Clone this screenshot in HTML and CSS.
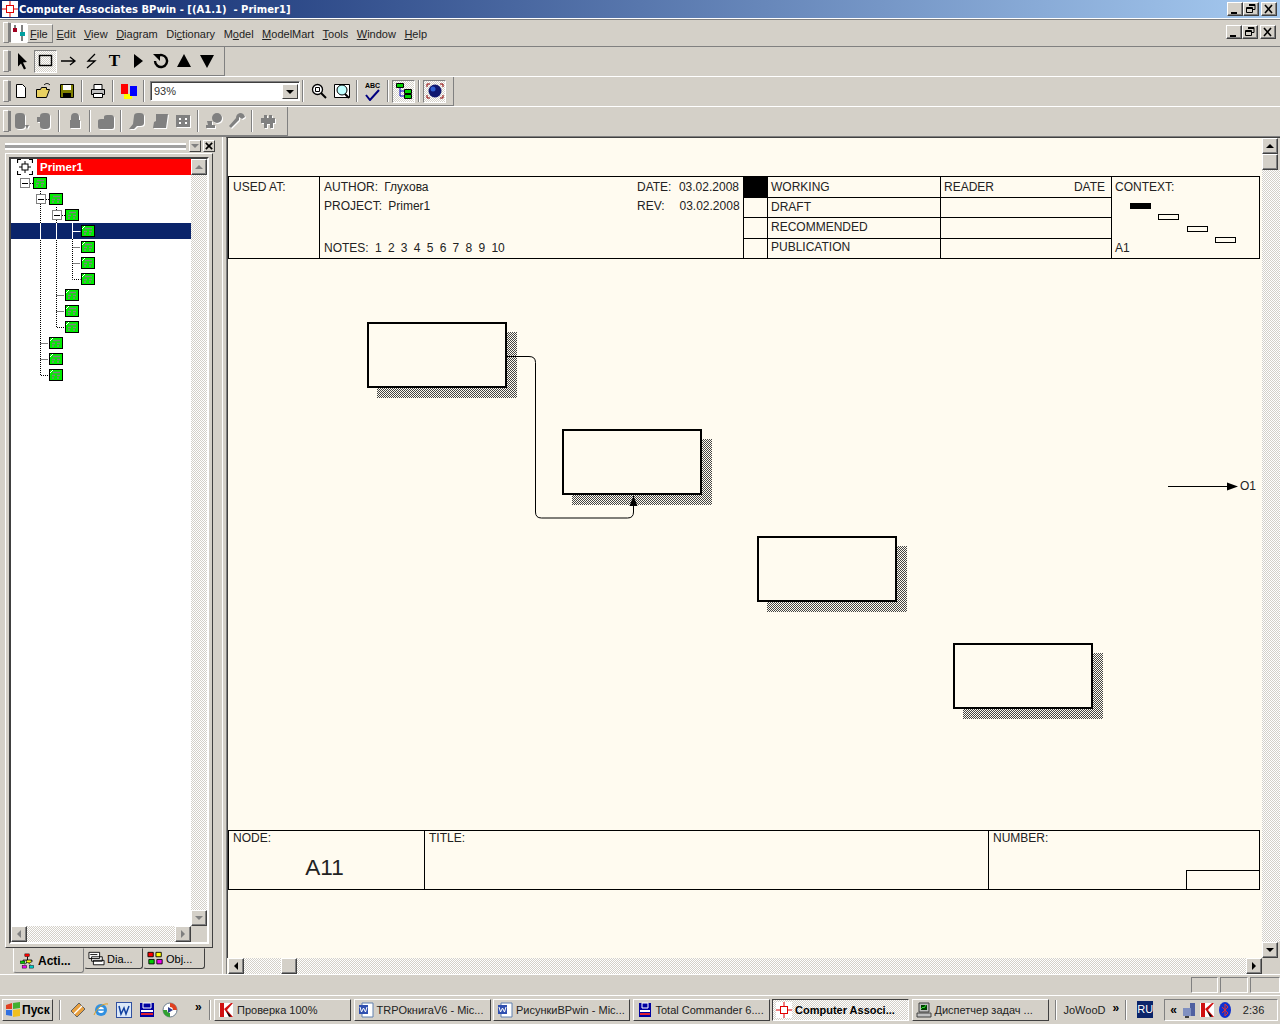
FILE: index.html
```html
<!DOCTYPE html>
<html lang="ru">
<head>
    <meta charset="UTF-8">
    <title>Computer Associates BPwin</title>
    <link rel="stylesheet" href="styles.css">
</head>
<body>
    <svg class="defs" width="0" height="0">
        <defs>
            <symbol id="ca" viewBox="0 0 16 16">
                <rect width="16" height="16" fill="#fff"/>
                <path d="M0 8h4M12 8h4M8 0v4M8 12v4" stroke="#e00000" fill="none"/>
                <rect x="4.500" y="4.500" width="7" height="7" fill="none" stroke="#e00000"/>
            </symbol>
            <symbol id="node" viewBox="0 0 14 12">
                <rect x=".5" y=".5" width="13" height="11" fill="#00ee00" stroke="#000"/>
                <path d="M4 3.500h7M3 6.500h3M8 6.500h3M3 9h2M8 9h2" stroke="#808080" stroke-width="1.300" fill="none"/>
            </symbol>
            <symbol id="leaf" viewBox="0 0 14 12">
                <rect x=".5" y=".5" width="13" height="11" fill="#00ee00" stroke="#000"/>
                <path d="M4 3.500h7M3 6.500h3M8 6.500h3M3 9h2M8 9h2" stroke="#808080" stroke-width="1.300" fill="none"/>
                <path d="M1 4l3-3" stroke="#fff"/>
            </symbol>
        </defs>
    </svg>

    <header class="titlebar">
        <svg class="title-icon"><use href="#ca"/></svg>
        <span class="title-text">Computer Associates BPwin - [(A1.1)&nbsp; - Primer1]</span>
        <div class="wbtns">
            <span class="wbtn"><svg viewBox="0 0 14 12"><path d="M3 9h6v2H3z"/></svg></span>
            <span class="wbtn"><svg viewBox="0 0 14 12"><path d="M5 1.500h6v5H9M2.500 4.500h6v5h-6z M5 2.500h6M2.500 5.500h6" fill="none" stroke="#000"/></svg></span>
            <span class="wbtn gap"><svg viewBox="0 0 14 12"><path d="M3 2l7 8M10 2l-7 8" stroke="#000" stroke-width="1.600"/></svg></span>
        </div>
    </header>

    <nav class="menubar">
        <span class="grip"></span>
        <svg class="menu-icon" viewBox="0 0 16 20"><rect width="16" height="20" fill="#fff"/><rect x="2" y="5" width="4" height="4" fill="#a00020"/><path d="M4 2v3" stroke="#000"/><path d="M11 2v16" stroke="#000"/><rect x="9" y="9" width="5" height="4" fill="#00a0a0"/></svg>
        <span class="menu-item active"><u>F</u>ile</span>
        <span class="menu-item"><u>E</u>dit</span>
        <span class="menu-item"><u>V</u>iew</span>
        <span class="menu-item"><u>D</u>iagram</span>
        <span class="menu-item">Di<u>c</u>tionary</span>
        <span class="menu-item">M<u>o</u>del</span>
        <span class="menu-item"><u>M</u>odelMart</span>
        <span class="menu-item"><u>T</u>ools</span>
        <span class="menu-item"><u>W</u>indow</span>
        <span class="menu-item"><u>H</u>elp</span>
        <div class="wbtns doc">
            <span class="wbtn"><svg viewBox="0 0 14 12"><path d="M3 9h6v2H3z"/></svg></span>
            <span class="wbtn"><svg viewBox="0 0 14 12"><path d="M5 1.500h6v5H9M2.500 4.500h6v5h-6z M5 2.500h6M2.500 5.500h6" fill="none" stroke="#000"/></svg></span>
            <span class="wbtn gap"><svg viewBox="0 0 14 12"><path d="M3 2l7 8M10 2l-7 8" stroke="#000" stroke-width="1.600"/></svg></span>
        </div>
    </nav>

    <div class="toolrow">
        <div class="toolbar tb-draw">
            <span class="grip"></span>
            <span class="tool"><svg viewBox="0 0 18 18"><path d="M4 1l9 9-4 .5 3 6-2 1-3-6-3 3z"/></svg></span>
            <span class="tool pressed"><svg viewBox="0 0 18 18"><rect x="2.500" y="3.500" width="12" height="10" fill="none" stroke="#000" stroke-width="1.400"/></svg></span>
            <span class="tool"><svg viewBox="0 0 18 18"><path d="M1 9h13M10 5l5 4-5 4" fill="none" stroke="#000" stroke-width="1.300"/></svg></span>
            <span class="tool"><svg viewBox="0 0 18 18"><path d="M12 2L5 9h7L4 16" fill="none" stroke="#000" stroke-width="1.300"/></svg></span>
            <span class="tool tool-t">T</span>
            <span class="tool"><svg viewBox="0 0 18 18"><path d="M5 2l9 7-9 7z"/></svg></span>
            <span class="tool"><svg viewBox="0 0 18 18"><path d="M3 9a6 6 0 1 0 2-4.500" fill="none" stroke="#000" stroke-width="2.400"/><path d="M1 2h7v7z"/></svg></span>
            <span class="tool"><svg viewBox="0 0 18 18"><path d="M9 2l7 13H2z"/></svg></span>
            <span class="tool"><svg viewBox="0 0 18 18"><path d="M9 16L2 3h14z"/></svg></span>
        </div>
    </div>

    <div class="toolrow">
        <div class="toolbar tb-main">
            <span class="grip"></span>
            <span class="tool"><svg viewBox="0 0 18 18"><path d="M4.500 2.500h6l3 3v10h-9z" fill="#fff" stroke="#000"/></svg></span>
            <span class="tool"><svg viewBox="0 0 18 18"><path d="M1.500 7.500h4l1-2h5v2h3l-3 8h-10z" fill="#e8d060" stroke="#000"/><path d="M9 3c2-2 4-2 6 0" fill="none" stroke="#000"/></svg></span>
            <span class="tool"><svg viewBox="0 0 18 18"><path d="M2.500 2.500h13v13h-13z" fill="#808000" stroke="#000"/><path d="M5 3h8v5H5z" fill="#fff"/><path d="M5 11h8v4H5z" fill="#000"/></svg></span>
            <span class="sep"></span>
            <span class="tool"><svg viewBox="0 0 18 18"><path d="M5 2.500h8v5H5z" fill="#fff" stroke="#000"/><path d="M2.500 7.500h13v5h-13z" fill="#c0c0c0" stroke="#000"/><path d="M4.500 11.500h9v4h-9z" fill="#fff" stroke="#000"/></svg></span>
            <span class="sep"></span>
            <span class="tool"><svg viewBox="0 0 18 18"><rect x="1" y="2" width="7" height="10" fill="#f00"/><rect x="4" y="12" width="8" height="5" fill="#ff0"/><rect x="10" y="4" width="7" height="10" fill="#00f"/></svg></span>
            <span class="sep"></span>
            <div class="combo"><span class="combo-value">93%</span><span class="combo-btn"><i></i></span></div>
            <span class="sep"></span>
            <span class="tool"><svg viewBox="0 0 18 18"><circle cx="7.500" cy="7.500" r="5" fill="#fff" stroke="#000" stroke-width="1.300"/><path d="M5.500 5.500h4v4h-4z" fill="none" stroke="#000"/><path d="M11 11l5 5" stroke="#000" stroke-width="2"/></svg></span>
            <span class="tool"><svg viewBox="0 0 18 18"><path d="M1.500 2.500h15v13h-15z" fill="#fff" stroke="#000"/><circle cx="9" cy="8" r="5" fill="#c0ffff" stroke="#000"/><path d="M12 12l4 4" stroke="#000" stroke-width="2"/></svg></span>
            <span class="sep"></span>
            <span class="tool tool-abc"><b>ABC</b><svg viewBox="0 0 18 12"><path d="M2 6l4 5L15 1" fill="none" stroke="#000080" stroke-width="2"/></svg></span>
            <span class="sep"></span>
            <span class="tool pressed"><svg viewBox="0 0 18 18"><path d="M5 5v9h5M5 9h5" fill="none" stroke="#0000c0"/><path d="M1.500 1.500h7v4h-7zM9.500 7.500h7v4h-7zM9.500 12.500h7v4h-7z" fill="#00d000" stroke="#000"/></svg></span>
            <span class="sep"></span>
            <span class="tool pressed"><svg viewBox="0 0 18 18"><circle cx="9" cy="9" r="6.500" fill="#101870"/><circle cx="7" cy="7" r="2.500" fill="#3060d0"/><path d="M1 5V2h3M14 2h3v3M1 13v3h3M14 16h3v-3" fill="none" stroke="#900000"/></svg></span>
        </div>
    </div>

    <div class="toolrow last">
        <div class="toolbar tb-model">
            <span class="grip"></span>
            <span class="tool off"><svg viewBox="0 0 18 18"><path d="M3 4q0-3 4-3h2q4 0 4 3v10q0 3-4 3H7q-4 0-4-3z M13 13h4l-2 4z"/></svg></span>
            <span class="tool off"><svg viewBox="0 0 18 18"><path d="M5 4q0-3 4-3h2q4 0 4 3v10q0 3-4 3H9q-4 0-4-3V10H2V5h3z"/></svg></span>
            <span class="sep"></span>
            <span class="tool off"><svg viewBox="0 0 18 18"><path d="M5 8V5a4 4 0 0 1 8 0v3h1v8H4V8z"/></svg></span>
            <span class="sep"></span>
            <span class="tool off"><svg viewBox="0 0 18 18"><path d="M1 9q0-2 3-2h3V5q0-2 3-2h4q3 0 3 3v9q0 2-2 2H3q-2 0-2-2z"/></svg></span>
            <span class="sep"></span>
            <span class="tool off"><svg viewBox="0 0 18 18"><path d="M6 4q0-3 4-3h2q4 0 4 3v7q0 3-4 3H9l-3 3H1l4-5z"/></svg></span>
            <span class="tool off"><svg viewBox="0 0 18 18"><path d="M5 2h12l-2 14H2l1-6 2-1z"/></svg></span>
            <span class="tool off"><svg viewBox="0 0 18 18"><path d="M2 3h14v12H2z"/><path d="M5 6h2v2H5zM11 6h2v2h-2zM5 10h2v2H5zM11 10h2v2h-2z" fill="#fff"/></svg></span>
            <span class="sep"></span>
            <span class="tool off"><svg viewBox="0 0 18 18"><circle cx="12" cy="6" r="5"/><path d="M2 9h5v4h3v3H1v-3h2z"/></svg></span>
            <span class="tool off"><svg viewBox="0 0 18 18"><path d="M12 1q4 0 5 4l-3 2-3-2v3L3 16 1 14l7-8q0-4 4-5z"/></svg></span>
            <span class="sep"></span>
            <span class="tool off"><svg viewBox="0 0 18 18"><path d="M5 3h3v3h2V3h3v3h3v5h-2v5h-3v-4H8v4H5v-5H2V6h3z"/></svg></span>
        </div>
    </div>

    <div class="workspace">
        <aside class="sidebar">
            <div class="dock-head">
                <span class="dock-grip"></span>
                <span class="dock-btn"><i class="tri-down"></i></span>
                <span class="dock-btn"><svg viewBox="0 0 11 11"><path d="M2 2l7 7M9 2l-7 7" stroke="#000" stroke-width="1.800"/></svg></span>
            </div>
            <div class="tree-frame">
                <div class="tree">
                    <div class="tree-body">
                        <div class="tree-root">
                            <svg class="root-icon" viewBox="0 0 16 16"><path d="M.5 4V.5H4M12 .5h3.500V4M.5 12v3.500H4M12 15.500h3.500V12" fill="none" stroke="#000" stroke-width="1.200"/><rect x="5" y="5" width="6" height="6" fill="#fff" stroke="#000"/><path d="M8 2v3M8 11v3M2 8h3M11 8h3" stroke="#000"/></svg>
                            <span class="root-label">Primer1</span>
                        </div>
                        <div class="tree-rows">
                            <div class="tree-row lvl-0"><span class="exp"></span><svg class="tn"><use href="#node"/></svg></div>
                            <div class="tree-row lvl-1"><span class="exp"></span><svg class="tn"><use href="#node"/></svg></div>
                            <div class="tree-row lvl-2"><span class="exp"></span><svg class="tn"><use href="#node"/></svg></div>
                            <div class="tree-row lvl-3 selected"><span class="noexp"></span><svg class="tn"><use href="#leaf"/></svg></div>
                            <div class="tree-row lvl-3"><span class="noexp"></span><svg class="tn"><use href="#leaf"/></svg></div>
                            <div class="tree-row lvl-3"><span class="noexp"></span><svg class="tn"><use href="#leaf"/></svg></div>
                            <div class="tree-row lvl-3"><span class="noexp"></span><svg class="tn"><use href="#leaf"/></svg></div>
                            <div class="tree-row lvl-2"><span class="noexp"></span><svg class="tn"><use href="#leaf"/></svg></div>
                            <div class="tree-row lvl-2"><span class="noexp"></span><svg class="tn"><use href="#leaf"/></svg></div>
                            <div class="tree-row lvl-2"><span class="noexp"></span><svg class="tn"><use href="#leaf"/></svg></div>
                            <div class="tree-row lvl-1"><span class="noexp"></span><svg class="tn"><use href="#leaf"/></svg></div>
                            <div class="tree-row lvl-1"><span class="noexp"></span><svg class="tn"><use href="#leaf"/></svg></div>
                            <div class="tree-row lvl-1"><span class="noexp"></span><svg class="tn"><use href="#leaf"/></svg></div>
                            <svg class="tree-lines" width="180" height="210" viewBox="0 0 180 210">
                                <path class="dot" d="M19 8.500h3M35 24.500h3M51 40.500h3M29.500 16v3M45.500 32v3M29.500 29v171.500h8M29.500 168.500h8M29.500 184.500h8M45.500 45v107.500h8M45.500 120.500h8M45.500 136.500h8M61.500 48v56.500h8M61.500 72.500h8M61.500 88.500h8"/>
                                <path class="solid" d="M29.500 48v16M45.500 48v16M61.500 48v16M61.500 56.500h8"/>
                            </svg>
                        </div>
                    </div>
                    <div class="sb-v">
                        <span class="sb-btn"><i class="tri-up gray"></i></span>
                        <span class="sb-track"></span>
                        <span class="sb-btn"><i class="tri-down gray"></i></span>
                    </div>
                    <div class="sb-h">
                        <span class="sb-btn"><i class="tri-left gray"></i></span>
                        <span class="sb-track"></span>
                        <span class="sb-btn"><i class="tri-right gray"></i></span>
                    </div>
                    <div class="sb-corner"></div>
                </div>
            </div>
            <div class="tabs">
                <span class="tab current">
                    <svg viewBox="0 0 18 18"><path d="M9 4v4M4 10V8h10v2M6 13l3-3 3 3" fill="none" stroke="#000"/><rect x="6" y="1" width="5" height="3" fill="#f00" stroke="#000" stroke-width=".5"/><rect x="1" y="9" width="5" height="3" fill="#0c0" stroke="#000" stroke-width=".5"/><rect x="8" y="8" width="5" height="3" fill="#ff0" stroke="#000" stroke-width=".5"/><rect x="3" y="14" width="5" height="3" fill="#e0e" stroke="#000" stroke-width=".5"/><rect x="11" y="14" width="5" height="3" fill="#0cc" stroke="#000" stroke-width=".5"/></svg>
                    Acti...
                </span>
                <span class="tab tab-dia">
                    <svg viewBox="0 0 18 18"><path d="M.5 1.500h12v7h-12zM3.500 6.500h12v5h-12zM5.500 10.500h12v5h-12z" fill="#fff" stroke="#000"/><path d="M2 4h8" stroke="#000"/></svg>
                    Dia...
                </span>
                <span class="tab tab-obj">
                    <svg viewBox="0 0 18 18"><path d="M.5 1.500h6v5h-6z" fill="#f00" stroke="#000"/><path d="M9.500 1.500h6v5h-6z" fill="#ff0" stroke="#000"/><path d="M1.500 9.500h6v5h-6z" fill="#0c0" stroke="#000"/><path d="M10.500 9.500h6v5h-6z" fill="#e0e" stroke="#000"/></svg>
                    Obj...
                </span>
            </div>
        </aside>

        <section class="docview">
            <div class="sheet-area">
                <div class="sheet-top"></div>
                <div class="form-head">
                    <div class="fh-used">USED AT:</div>
                    <div class="fh-author">
                        <div class="fh-line"><span class="k1">AUTHOR:&nbsp; Глухова</span><span class="k2">DATE:&nbsp; 03.02.2008</span></div>
                        <div class="fh-line"><span class="k1">PROJECT:&nbsp; Primer1</span><span class="k2">REV:&nbsp; &nbsp; 03.02.2008</span></div>
                        <div class="fh-notes">NOTES:&nbsp; 1&nbsp; 2&nbsp; 3&nbsp; 4&nbsp; 5&nbsp; 6&nbsp; 7&nbsp; 8&nbsp; 9&nbsp; 10</div>
                    </div>
                    <div class="fh-status">
                        <div class="st-row"><span class="st-mark black"></span><span class="st-name">WORKING</span><span class="st-reader"><span>READER</span><span>DATE</span></span></div>
                        <div class="st-row"><span class="st-mark"></span><span class="st-name">DRAFT</span><span class="st-reader"></span></div>
                        <div class="st-row"><span class="st-mark"></span><span class="st-name">RECOMMENDED</span><span class="st-reader"></span></div>
                        <div class="st-row"><span class="st-mark"></span><span class="st-name">PUBLICATION</span><span class="st-reader"></span></div>
                    </div>
                    <div class="fh-context">
                        <span class="ctx-title">CONTEXT:</span>
                        <span class="ctx-box ctx-1"></span>
                        <span class="ctx-box ctx-2"></span>
                        <span class="ctx-box ctx-3"></span>
                        <span class="ctx-box ctx-4"></span>
                        <span class="ctx-node">A1</span>
                    </div>
                </div>
                <div class="diagram">
                    <div class="box box-1"></div>
                    <div class="box box-2"></div>
                    <div class="box box-3"></div>
                    <div class="box box-4"></div>
                    <svg class="arrows" width="1032" height="570" viewBox="0 0 1032 570">
                        <path d="M278 97.500h23q6.500 0 6.500 6V253q0 6 6 6h86q6 0 6-6v-16" fill="none" stroke="#000"/>
                        <path d="M405.500 237l4 10h-8z" fill="#000"/>
                        <path d="M940 227.500h62" fill="none" stroke="#000"/>
                        <path d="M999 223.500l11 4-11 4z" fill="#000"/>
                    </svg>
                    <span class="o1">O1</span>
                </div>
                <div class="form-foot">
                    <div class="ff-node"><span>NODE:</span><b>A11</b></div>
                    <div class="ff-title">TITLE:</div>
                    <div class="ff-number">NUMBER:<span class="ff-page"></span></div>
                </div>
            </div>
            <div class="sb-v big">
                <span class="sb-btn"><i class="tri-up"></i></span>
                <span class="sb-thumb"></span>
                <span class="sb-track"></span>
                <span class="sb-btn"><i class="tri-down"></i></span>
            </div>
            <div class="sb-h big">
                <span class="sb-btn"><i class="tri-left"></i></span>
                <span class="sb-track narrow"></span>
                <span class="sb-thumb"></span>
                <span class="sb-track"></span>
                <span class="sb-btn"><i class="tri-right"></i></span>
            </div>
            <div class="sb-corner"></div>
        </section>
    </div>

    <div class="statusbar">
        <span class="st-pane p1"></span>
        <span class="st-pane p2"></span>
        <span class="st-pane p3"></span>
    </div>

    <footer class="taskbar">
        <span class="start">
            <svg viewBox="0 0 16 16"><path d="M1 3l6-2v6H1z" fill="#e04020"/><path d="M8 1l7-1v6l-7 1z" fill="#40b030"/><path d="M1 8h6v6l-6-1z" fill="#3070e0"/><path d="M8 8l7-1v7l-7 1z" fill="#f0c020"/></svg>
            Пуск
        </span>
        <span class="tray-sep"></span>
        <div class="quick">
            <svg viewBox="0 0 16 16"><path d="M9 1l6 6-8 8-6-6z" fill="#e8a040" stroke="#606060"/><path d="M4 12L12 4" stroke="#fff" stroke-width="1.500"/></svg>
            <svg viewBox="0 0 16 16"><circle cx="8" cy="8" r="6" fill="#3090e0"/><circle cx="8" cy="8" r="3" fill="#fff"/><path d="M5 8h6" stroke="#3090e0" stroke-width="1.500"/><path d="M1 13C4 6 10 1 15 2" fill="none" stroke="#e0a020"/></svg>
            <svg viewBox="0 0 16 16"><rect x=".5" y=".5" width="15" height="15" fill="#dbe8f8" stroke="#3050a0"/><path d="M3 4l2 8 3-6 2 6 3-8" fill="none" stroke="#1040a0" stroke-width="1.500"/></svg>
            <svg viewBox="0 0 16 16"><path d="M1 1h14v14H1z" fill="#0000a0"/><path d="M4 1h8v5H4z" fill="#0000a0" stroke="#fff"/><path d="M2 8h12v2H2z" fill="#fff"/><path d="M2 11h12v2H2z" fill="#e02030"/></svg>
            <svg viewBox="0 0 16 16"><circle cx="8" cy="8" r="7" fill="#fff" stroke="#708090"/><path d="M8 1a7 7 0 0 1 7 7h-4a3 3 0 0 0-3-3z" fill="#e04020"/><path d="M1 8a7 7 0 0 0 7 7v-4a3 3 0 0 1-3-3z" fill="#30a030"/><path d="M6 5l5 3-5 3z" fill="#304090"/></svg>
            <span class="more">»</span>
        </div>
        <span class="tray-sep"></span>
        <div class="tasks">
            <span class="task"><svg viewBox="0 0 16 16"><path d="M1 1h14v14H1z" fill="#fff"/><path d="M2 1h4v14H2zM6 7l7-6h2L9 8l6 7h-3z" fill="#d01010"/><path d="M8 9l5 5-2 1z"/></svg><span>Проверка 100%</span></span>
            <span class="task"><svg viewBox="0 0 16 16"><path d="M4 1h11v14H4z" fill="#fff" stroke="#6080b0"/><rect x="1" y="3" width="9" height="9" fill="#3050b0"/><path d="M2 5l1.500 5L5.500 6l2 4L9 5" fill="none" stroke="#fff"/></svg><span>TRPOкнигаV6 - Mic...</span></span>
            <span class="task"><svg viewBox="0 0 16 16"><path d="M4 1h11v14H4z" fill="#fff" stroke="#6080b0"/><rect x="1" y="3" width="9" height="9" fill="#3050b0"/><path d="M2 5l1.500 5L5.500 6l2 4L9 5" fill="none" stroke="#fff"/></svg><span>РисункиBPwin - Mic...</span></span>
            <span class="task"><svg viewBox="0 0 16 16"><path d="M2 1h12v14H2z" fill="#0000a0"/><path d="M5 1h6v5H5z" fill="#0000a0" stroke="#fff"/><path d="M3 8h10v2H3z" fill="#fff"/><path d="M3 11h10v2H3z" fill="#e02030"/></svg><span>Total Commander 6....</span></span>
            <span class="task current"><svg><use href="#ca"/></svg><span>Computer Associ...</span></span>
            <span class="task"><svg viewBox="0 0 16 16"><path d="M3 1h10v9H3z" fill="#c0c0c0" stroke="#404040"/><path d="M5 3h6v5H5z" fill="#004000"/><path d="M5 7l2-2 1 1 2-3" stroke="#30e030" fill="none"/><path d="M1 11h14v4H1z" fill="#c0c0c0" stroke="#404040"/></svg><span>Диспетчер задач ...</span></span>
        </div>
        <span class="tray-sep"></span>
        <span class="jowood">JoWooD</span><span class="more two">»</span>
        <span class="tray-sep"></span>
        <span class="lang">RU</span>
        <div class="tray">
            <span class="tray-arrow">«</span>
            <svg viewBox="0 0 16 16"><path d="M9 1h5v13H9z" fill="#5060a0"/><path d="M2 6h8v8H2z" fill="#8090c0"/><path d="M4 14h4v2H4z" fill="#404040"/></svg>
            <svg viewBox="0 0 16 16"><path d="M1 1h14v14H1z" fill="#fff"/><path d="M2 1h4v14H2zM6 7l7-6h2L9 8l6 7h-3z" fill="#d01010"/><path d="M8 9l5 5-2 1z"/></svg>
            <svg viewBox="0 0 16 16"><ellipse cx="8" cy="8" rx="6" ry="8" fill="#1030d0"/><path d="M5 5l6 6-3 3V2l3 3-6 6" fill="none" stroke="#e03030"/></svg>
            <span class="clock">2:36</span>
        </div>
    </footer>
</body>
</html>
```

FILE: styles.css
```css
* {
    box-sizing: border-box;
}

html, body {
    margin: 0;
    padding: 0;
}

body {
    width: 1280px;
    height: 1024px;
    overflow: hidden;
    display: flex;
    flex-direction: column;
    background-color: #d4d0c8;
    color: #000;
    font-family: "Liberation Sans", Arial, sans-serif;
    font-size: 11px;
}

.defs {
    position: absolute;
}

svg {
    display: block;
    flex: none;
}

/* window title */
.titlebar {
    height: 18px;
    display: flex;
    align-items: center;
    padding: 0 3px 0 2px;
    background: linear-gradient(to right, #0a246a, #a6caf0);
    color: #fff;
    font-weight: bold;
    flex: none;
}

.title-icon {
    width: 16px;
    height: 16px;
}

.title-text {
    margin-left: 1px;
    font-family: "DejaVu Sans", sans-serif;
    font-size: 10px;
}

.wbtns {
    margin-left: auto;
    display: flex;
}

.wbtn {
    width: 16px;
    height: 14px;
    background: #d4d0c8;
    border: 1px solid;
    border-color: #fff #404040 #404040 #fff;
    box-shadow: inset -1px -1px 0 #808080;
}

.wbtn.gap {
    margin-left: 2px;
}

.wbtn svg {
    width: 14px;
    height: 12px;
}

/* menu */
.menubar {
    height: 29px;
    flex: none;
    display: flex;
    align-items: center;
    padding: 0 2px 0 3px;
    border-top: 1px solid #fff;
    border-bottom: 1px solid #808080;
    box-shadow: inset 0 1px 0 #808080;
}

.grip {
    width: 6px;
    align-self: stretch;
    margin: 3px 2px 3px 0;
    flex: none;
    border: 1px solid;
    border-color: #fff #808080 #808080 #fff;
    box-shadow: 3px 0 0 -1px #808080;
}

.menu-icon {
    width: 16px;
    height: 20px;
}

.menu-item {
    padding: 0 5px 0 3.500px;
    height: 19px;
    line-height: 19px;
    margin-top: 3px;
    color: #222;
}

.menu-item.active {
    margin-top: 2px;
    padding: 0 6px 0 2px;
    border: 1px solid;
    border-color: #fff #808080 #808080 #fff;
    line-height: 18px;
    width: 26px;
}

.wbtns.doc {
    padding-right: 2px;
    margin-bottom: 2px;
}

/* toolbars */
.toolrow {
    height: 30px;
    flex: none;
    display: flex;
    border-bottom: 1px solid #fff;
}

.toolrow.last {
    border-bottom: 1px solid #808080;
}

.toolbar {
    height: 29px;
    display: flex;
    align-items: center;
    padding: 0 2px 0 3px;
    border-right: 1px solid #808080;
    border-bottom: 1px solid #808080;
}

.tb-draw {
    width: 225px;
}

.tb-main {
    width: 454px;
}

.tb-model {
    width: 288px;
}

.tb-main .grip, .tb-model .grip {
    margin-right: 0;
}

.tool {
    width: 23px;
    height: 23px;
    flex: none;
    display: flex;
    align-items: center;
    justify-content: center;
}

.tool svg {
    width: 18px;
    height: 18px;
}

.tool.pressed {
    border: 1px solid;
    border-color: #808080 #fff #fff #808080;
    background: repeating-conic-gradient(#fff 0 25%, #d4d0c8 0 50%) 0 0 / 2px 2px;
}

.tool.off svg {
    fill: #808080;
    filter: drop-shadow(1px 1px 0 #fff);
}

.tool-t {
    font-family: "Liberation Serif", serif;
    font-weight: bold;
    font-size: 17px;
}

.tool-abc {
    flex-direction: column;
}

.tool-abc b {
    font-size: 7px;
    line-height: 7px;
}

.tool-abc svg {
    height: 12px;
}

.sep {
    width: 2px;
    height: 22px;
    flex: none;
    margin: 0 3px;
    border-left: 1px solid #808080;
    border-right: 1px solid #fff;
}

.combo {
    width: 150px;
    height: 20px;
    flex: none;
    margin: 0 -1px 0 2px;
    display: flex;
    background: #fff;
    border: 1px solid;
    border-color: #808080 #fff #fff #808080;
    box-shadow: inset 1px 1px 0 #404040;
}

.combo-value {
    flex: 1;
    padding: 3px 0 0 3px;
    color: #333;
}

.combo-btn {
    width: 16px;
    margin: 2px 1px 1px 0;
    background: #d4d0c8;
    border: 1px solid;
    border-color: #fff #404040 #404040 #fff;
    display: flex;
    align-items: center;
    justify-content: center;
}

.combo-btn i {
    border: 4px solid transparent;
    border-top-color: #000;
    border-bottom: 0;
}

/* left panel */
.workspace {
    flex: 1;
    display: flex;
    min-height: 0;
    border-bottom: 1px solid #fff;
}

.sidebar {
    width: 226px;
    flex: none;
    display: flex;
    flex-direction: column;
    padding: 3px 13px 0 5px;
    background: linear-gradient(#fff, #fff) 222px 0 / 1px 100% no-repeat;
}

.dock-head {
    height: 12px;
    flex: none;
    display: flex;
    align-items: center;
    gap: 2px;
    margin-right: -2px;
}

.dock-grip {
    flex: 1;
    height: 7px;
    border-top: 2px solid #fff;
    border-bottom: 2px solid #fff;
    background: #a0a0a0;
    margin-right: 1px;
}

.dock-btn {
    width: 12px;
    height: 12px;
    display: flex;
    align-items: center;
    justify-content: center;
    border: 1px solid;
    border-color: #fff #404040 #404040 #fff;
}

.dock-btn svg {
    width: 10px;
    height: 10px;
}

.dock-btn .tri-down {
    border-top-color: #808080;
}

.tree-frame {
    height: 795px;
    margin-top: 1px;
    flex: none;
    padding: 3px;
    border: 1px solid;
    border-color: #fff #404040 #404040 #fff;
}

.tree {
    height: 100%;
    display: grid;
    grid-template-columns: 1fr 16px;
    grid-template-rows: 1fr 16px;
    border: 2px solid;
    border-color: #404040 #fff #fff #404040;
    background: #fff;
}

.tree-body {
    overflow: hidden;
}

.tree-root {
    height: 16px;
    display: flex;
    background: #fff;
    color: #fff;
}

.root-icon {
    width: 16px;
    height: 16px;
    margin: 0 4px 0 6px;
}

.root-label {
    flex: 1;
    padding-left: 3px;
    line-height: 17px;
    background: #f00;
    font-size: 11.500px;
    font-weight: bold;
}

.tree-rows {
    position: relative;
}

.tree-row {
    height: 16px;
    display: flex;
    padding-top: 2px;
}

.tree-row.selected {
    background: #0a246a;
}

.lvl-0 {
    padding-left: 9px;
}

.lvl-1 {
    padding-left: 25px;
}

.lvl-2 {
    padding-left: 41px;
}

.lvl-3 {
    padding-left: 57px;
}

.exp {
    width: 10px;
    height: 10px;
    margin: 1px 3px 0 0;
    flex: none;
    background: #fff linear-gradient(#000, #000) center / 6px 1px no-repeat;
    border: 1px solid #808080;
}

.noexp {
    width: 13px;
    flex: none;
}

.tn {
    width: 14px;
    height: 12px;
}

.tree-lines {
    position: absolute;
    left: 0;
    top: 0;
}

.tree-lines .dot {
    stroke: #000;
    fill: none;
    stroke-dasharray: 1 1;
}

.tree-lines .solid {
    stroke: #fff;
    fill: none;
}

/* scrollbars */
.sb-v {
    display: flex;
    flex-direction: column;
    width: 16px;
}

.sb-h {
    display: flex;
    height: 16px;
}

.sb-v.big {
    width: 18px;
    background: #d4d0c8;
}

.sb-h.big {
    padding-left: 1px;
}

.sb-track {
    flex: 1;
    background: repeating-conic-gradient(#fff 0 25%, #d4d0c8 0 50%) 0 0 / 2px 2px;
}

.sb-track.narrow {
    flex: none;
    width: 37px;
}

.sb-btn, .sb-thumb {
    width: 16px;
    height: 16px;
    flex: none;
    display: flex;
    align-items: center;
    justify-content: center;
    background: #d4d0c8;
    border: 1px solid;
    border-color: #fff #404040 #404040 #fff;
    box-shadow: inset -1px -1px 0 #808080;
}

.sb-corner {
    background: #d4d0c8;
}

.tri-up, .tri-down, .tri-left, .tri-right {
    width: 0;
    height: 0;
    border: 4px solid transparent;
}

.tri-up {
    border-top: 0;
    border-bottom-color: #000;
}

.tri-down {
    border-bottom: 0;
    border-top-color: #000;
}

.tri-left {
    border-left: 0;
    border-right-color: #000;
}

.tri-right {
    border-right: 0;
    border-left-color: #000;
}

.tri-up.gray {
    border-bottom-color: #808080;
}

.tri-down.gray {
    border-top-color: #808080;
}

.tri-left.gray {
    border-right-color: #808080;
}

.tri-right.gray {
    border-left-color: #808080;
}

.tabs {
    display: flex;
    padding-left: 8px;
    height: 26px;
    align-items: flex-start;
}

.tab {
    height: 21px;
    display: flex;
    align-items: center;
    gap: 2px;
    padding-left: 3px;
    font-size: 11px;
    border: 1px solid;
    border-color: transparent #404040 #404040 #d4d0c8;
    border-radius: 0 0 3px 3px;
}

.tab svg {
    width: 17px;
    height: 16px;
}

.tab-dia {
    width: 59px;
}

.tab-obj {
    width: 62px;
}

.tab.current {
    width: 71px;
    height: 25px;
    font-size: 12px;
    font-weight: bold;
    padding-left: 5px;
    border-color: #d4d0c8 #808080 #808080 #fff;
}

/* document */
.docview {
    flex: 1;
    display: grid;
    grid-template-columns: 1fr 18px;
    grid-template-rows: 1fr 16px;
    border-left: 1px solid #808080;
    border-top: 1px solid #404040;
    background: #fffbf0;
}

.sheet-area {
    display: flex;
    flex-direction: column;
    min-width: 0;
    overflow: hidden;
    border-left: 1px solid #404040;
}

.sheet-top {
    height: 38px;
    flex: none;
}

.form-head, .form-foot {
    flex: none;
    display: flex;
    border: 1px solid #000;
    color: #222;
    font-size: 12px;
    width: 1032px;
}

.form-head {
    height: 83px;
}

.fh-used {
    width: 91px;
    padding: 3px 4px;
    border-right: 1px solid #000;
}

.fh-author {
    width: 424px;
    padding: 3px 4px;
    display: flex;
    flex-direction: column;
    border-right: 1px solid #000;
    word-spacing: -.2px;
}

.fh-line {
    height: 19px;
    display: flex;
}

.k1 {
    width: 313px;
    flex: none;
}

.k2 {
    white-space: nowrap;
    word-spacing: .4px;
}

.fh-notes {
    margin-top: auto;
}

.fh-status {
    width: 368px;
    display: flex;
    flex-direction: column;
    border-right: 1px solid #000;
}

.st-row {
    flex: 1;
    display: flex;
    border-bottom: 1px solid #000;
}

.st-row:last-child {
    border-bottom: 0;
}

.st-mark {
    width: 24px;
    border-right: 1px solid #000;
}

.st-mark.black {
    background: #000;
}

.st-name {
    width: 173px;
    padding: 2px 3px;
    border-right: 1px solid #000;
}

.st-row:first-child .st-name {
    padding-top: 3px;
}

.st-row:last-child .st-name {
    padding-top: 1px;
}

.st-reader {
    flex: 1;
    display: flex;
    justify-content: space-between;
    padding: 3px 6px 0 3px;
}

.fh-context {
    flex: 1;
    position: relative;
    padding: 3px;
}

.ctx-box {
    position: absolute;
    width: 21px;
    height: 6px;
    border: 1px solid #000;
}

.ctx-1 {
    left: 18px;
    top: 26px;
    background: #000;
}

.ctx-2 {
    left: 46px;
    top: 37px;
}

.ctx-3 {
    left: 75px;
    top: 49px;
}

.ctx-4 {
    left: 103px;
    top: 60px;
}

.ctx-node {
    position: absolute;
    left: 3px;
    bottom: 3px;
}

.diagram {
    flex: none;
    height: 571px;
    position: relative;
    width: 1032px;
    isolation: isolate;
}

.box {
    position: absolute;
    width: 140px;
    height: 66px;
    border: 2px solid #000;
    background: #fffbf0;
}

.box::after {
    content: "";
    position: absolute;
    z-index: -1;
    left: 8px;
    top: 8px;
    width: 140px;
    height: 66px;
    background: repeating-conic-gradient(#444 0 25%, #fffbf0 0 50%) 0 0 / 2px 2px;
}

.box-1 {
    left: 139px;
    top: 63px;
}

.box-2 {
    left: 334px;
    top: 170px;
}

.box-3 {
    left: 529px;
    top: 277px;
}

.box-4 {
    left: 725px;
    top: 384px;
}

.arrows {
    position: absolute;
    left: 0;
    top: 0;
}

.o1 {
    position: absolute;
    left: 1012px;
    top: 220px;
    font-size: 12px;
    color: #222;
}

.form-foot {
    height: 60px;
}

.ff-node {
    width: 196px;
    padding: 0 4px;
    border-right: 1px solid #000;
    display: flex;
    flex-direction: column;
}

.ff-node b {
    font-weight: normal;
    font-size: 22.500px;
    text-align: center;
    margin: 10px 4px 0 0;
}

.ff-title {
    width: 564px;
    padding: 0 4px;
    border-right: 1px solid #000;
}

.ff-number {
    flex: 1;
    padding: 0 4px;
    position: relative;
}

.ff-page {
    position: absolute;
    right: 0;
    bottom: 0;
    width: 73px;
    height: 19px;
    border-top: 1px solid #000;
    border-left: 1px solid #000;
}

/* status and taskbar */
.statusbar {
    height: 20px;
    flex: none;
    display: flex;
    justify-content: flex-end;
    padding: 2px 0;
    gap: 2px;
}

.st-pane {
    border: 1px solid;
    border-color: #808080 #fff #fff #808080;
}

.p1 {
    width: 27px;
}

.p2 {
    width: 28px;
}

.p3 {
    width: 30px;
}

.taskbar {
    height: 29px;
    flex: none;
    display: flex;
    align-items: center;
    padding: 0 0 1px 2px;
    border-top: 1px solid #fff;
}

.taskbar svg {
    width: 16px;
    height: 16px;
}

.start {
    width: 51px;
    height: 22px;
    flex: none;
    display: flex;
    align-items: center;
    gap: 1px;
    padding-left: 2px;
    font-size: 12px;
    font-weight: bold;
    border: 1px solid;
    border-color: #fff #404040 #404040 #fff;
}

.tray-sep {
    width: 2px;
    height: 20px;
    flex: none;
    margin: 0 6px;
    border-left: 1px solid #808080;
    border-right: 1px solid #fff;
}

.quick {
    display: flex;
    gap: 7px;
    align-items: center;
    width: 139px;
    flex: none;
    padding-left: 3px;
    margin-right: -3px;
}

.more {
    font-weight: bold;
    font-size: 12px;
    align-self: flex-start;
    margin: -2px 0 0 10px;
}

.more.two {
    margin: -4px 0 0 7px;
    align-self: center;
}

.tasks {
    display: flex;
    gap: 2.500px;
    flex: none;
    margin-left: -3px;
}

.task {
    width: 137px;
    height: 22px;
    display: flex;
    align-items: center;
    gap: 3px;
    padding-left: 3px;
    white-space: nowrap;
    overflow: hidden;
    border: 1px solid;
    border-color: #fff #404040 #404040 #fff;
    color: #222;
}

.task.current {
    font-weight: bold;
    border-color: #404040 #fff #fff #404040;
    background: repeating-conic-gradient(#fff 0 25%, #d4d0c8 0 50%) 0 0 / 2px 2px;
    color: #000;
}

.jowood {
    color: #222;
    flex: none;
    margin-left: 1px;
}

.lang {
    width: 16px;
    height: 17px;
    flex: none;
    margin-left: 4px;
    background: #0a246a;
    color: #fff;
    text-align: center;
    line-height: 17px;
}

.tray {
    margin-left: 11px;
    flex: 1;
    height: 22px;
    display: flex;
    align-items: center;
    gap: 2px;
    padding-left: 5px;
    margin-right: 2px;
    border: 1px solid;
    border-color: #808080 #fff #fff #808080;
}

.tray-arrow {
    font-weight: bold;
    font-size: 12px;
    margin-right: 2px;
}

.clock {
    margin-left: 8px;
    color: #222;
}
```
